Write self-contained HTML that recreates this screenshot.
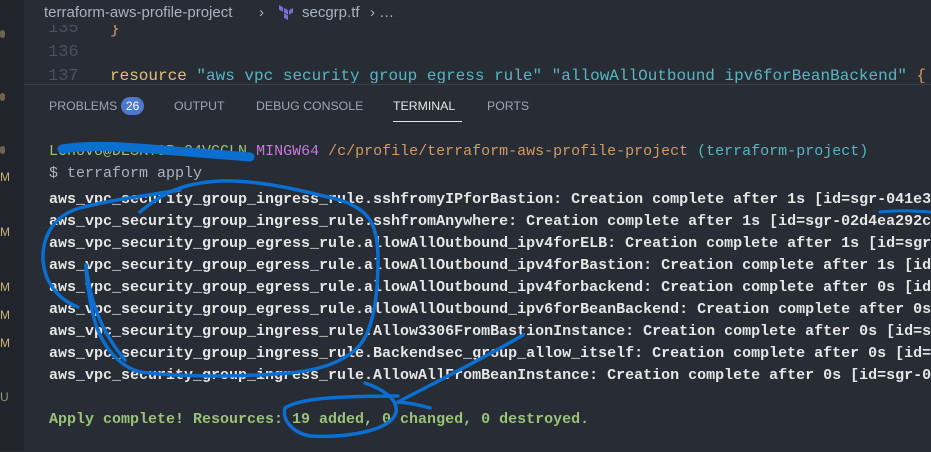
<!DOCTYPE html>
<html><head><meta charset="utf-8"><style>
body{margin:0;width:931px;height:451px;overflow:hidden;background:#282c34;position:relative;font-family:"Liberation Sans",sans-serif}
.gut{position:absolute;left:0;top:0;width:24px;height:451px;background:#21252b}
.crumb{position:absolute;left:24px;top:0;width:907px;height:25px;background:#282c34;color:#a9b2c0;font-size:15px;line-height:25px}
.ed{position:absolute;left:24px;top:25px;width:907px;height:58px;background:#282c34;font-family:"Liberation Mono",monospace;font-size:16px;overflow:hidden}
.ln{position:absolute;left:24px;color:#495162;font-size:17px}
.code{position:absolute;left:86px;white-space:pre}
.panel{position:absolute;left:24px;top:84px;width:907px;height:367px;background:#282c34;border-top:1px solid #3b4048}
.tabs{position:absolute;top:14px;left:25px;font-size:12.3px;color:#9da5b4;white-space:nowrap}
.tabs span{position:absolute;top:0}
.term{position:absolute;left:25px;font-family:"Liberation Mono",monospace;font-size:15px;white-space:pre;line-height:22px}
.out{font-weight:bold;color:#e6e6e6}
.dot{position:absolute;left:0;width:5px;height:8px;border-radius:3px;background:#6e6150}
.m{position:absolute;left:0;color:#c8b07a;font-size:12px;font-family:"Liberation Sans",sans-serif}
</style></head><body>
<div class="gut"></div>
<div class="dot" style="top:30px"></div><div class="dot" style="top:93px"></div><div class="dot" style="top:146px"></div>
<div class="m" style="top:170px">M</div><div class="m" style="top:225px">M</div><div class="m" style="top:280px">M</div><div class="m" style="top:308px">M</div><div class="m" style="top:336px">M</div><div class="m" style="top:390px;color:#7fa070">U</div>
<div class="crumb"><span style="position:absolute;left:20px">terraform-aws-profile-project</span><span style="position:absolute;left:235px">›</span>
<svg style="position:absolute;left:255px;top:5px" width="14" height="15" viewBox="0 0 14 15"><path d="M0 0l4 2.3v4.6L0 4.6z M5 2.9l4 2.3v4.6l-4-2.3z M10 5.2l4-2.3v4.6l-4 2.3z M5 8.2l4 2.3v4.6l-4-2.3z" fill="#7b6fd6"/></svg>
<span style="position:absolute;left:278px">secgrp.tf</span><span style="position:absolute;left:346px">› …</span></div>
<div class="ed">
<div class="ln" style="top:-6px">135</div><div class="code" style="top:-5px;color:#d19a66">}</div>
<div class="ln" style="top:18px">136</div>
<div class="ln" style="top:42px">137</div><div class="code" style="top:42px"><span style="color:#e5c07b">resource</span> <span style="color:#56b6c2">"aws vpc security group egress rule" "allowAllOutbound ipv6forBeanBackend"</span> <span style="color:#d19a66">{</span></div>
</div>
<div class="panel">
<div class="tabs"><span style="left:0">PROBLEMS</span><span style="left:72px;top:-2px;background:#4d78cc;color:#fff;border-radius:9px;padding:1px 5px;font-size:12px;line-height:16px">26</span>
<span style="left:125px">OUTPUT</span><span style="left:207px">DEBUG CONSOLE</span><span style="left:344px;color:#e6e6e6">TERMINAL</span><span style="left:344px;top:22px;width:69px;height:1px;background:#e6e6e6"></span><span style="left:438px">PORTS</span></div>
<div class="term" style="top:56px"><span style="color:#98c379">Lenovo@DESKTOP-24VGCLN</span> <span style="color:#c678dd">MINGW64</span> <span style="color:#d19a66">/c/profile/terraform-aws-profile-project</span> <span style="color:#56b6c2">(terraform-project)</span>
<span style="color:#abb2bf">$ terraform apply</span></div>
<div class="term out" style="top:104px">aws_vpc_security_group_ingress_rule.sshfromyIPforBastion: Creation complete after 1s [id=sgr-041e3
aws_vpc_security_group_ingress_rule.sshfromAnywhere: Creation complete after 1s [id=sgr-02d4ea292c
aws_vpc_security_group_egress_rule.allowAllOutbound_ipv4forELB: Creation complete after 1s [id=sgr
aws_vpc_security_group_egress_rule.allowAllOutbound_ipv4forBastion: Creation complete after 1s [id
aws_vpc_security_group_egress_rule.allowAllOutbound_ipv4forbackend: Creation complete after 0s [id
aws_vpc_security_group_egress_rule.allowAllOutbound_ipv6forBeanBackend: Creation complete after 0s
aws_vpc_security_group_ingress_rule.Allow3306FromBastionInstance: Creation complete after 0s [id=s
aws_vpc_security_group_ingress_rule.Backendsec_group_allow_itself: Creation complete after 0s [id=
aws_vpc_security_group_ingress_rule.AllowAllFromBeanInstance: Creation complete after 0s [id=sgr-0

<span style="color:#98c379">Apply complete! Resources: 19 added, 0 changed, 0 destroyed.</span></div>
</div>
<svg style="position:absolute;left:0;top:0" width="931" height="451" fill="none" stroke="#0a6fd0" stroke-linecap="round" stroke-linejoin="round">
<path d="M62 149 C100 143 150 149 175 151 C200 153 240 156 250 157" stroke-width="9"/>
<path d="M140 212 C160 195 180 183 220 181 C260 180 300 190 340 200 C370 210 378 225 378 260 C378 300 372 330 360 345 C345 362 320 370 290 373 C230 378 170 376 140 372 C115 365 98 340 92 310 C88 290 86 275 86 265" stroke-width="3.5"/>
<path d="M78 307 C60 300 45 285 43 260 C42 235 55 215 80 208 C110 200 150 195 180 190" stroke-width="3.5"/>
<path d="M86 265 C90 300 100 330 125 360" stroke-width="3.5"/>
<path d="M523 335 C490 355 440 380 398 402" stroke-width="3.5"/>
<path d="M398 402 C410 403 420 405 430 408" stroke-width="3.5"/>
<path d="M365 383 C385 390 398 400 396 412 C392 430 350 438 310 436 C290 432 282 418 285 408 C300 398 340 396 398 396" stroke-width="3.5"/>
<path d="M880 212 C900 210 915 211 931 212" stroke-width="3"/>
</svg>
</body></html>
